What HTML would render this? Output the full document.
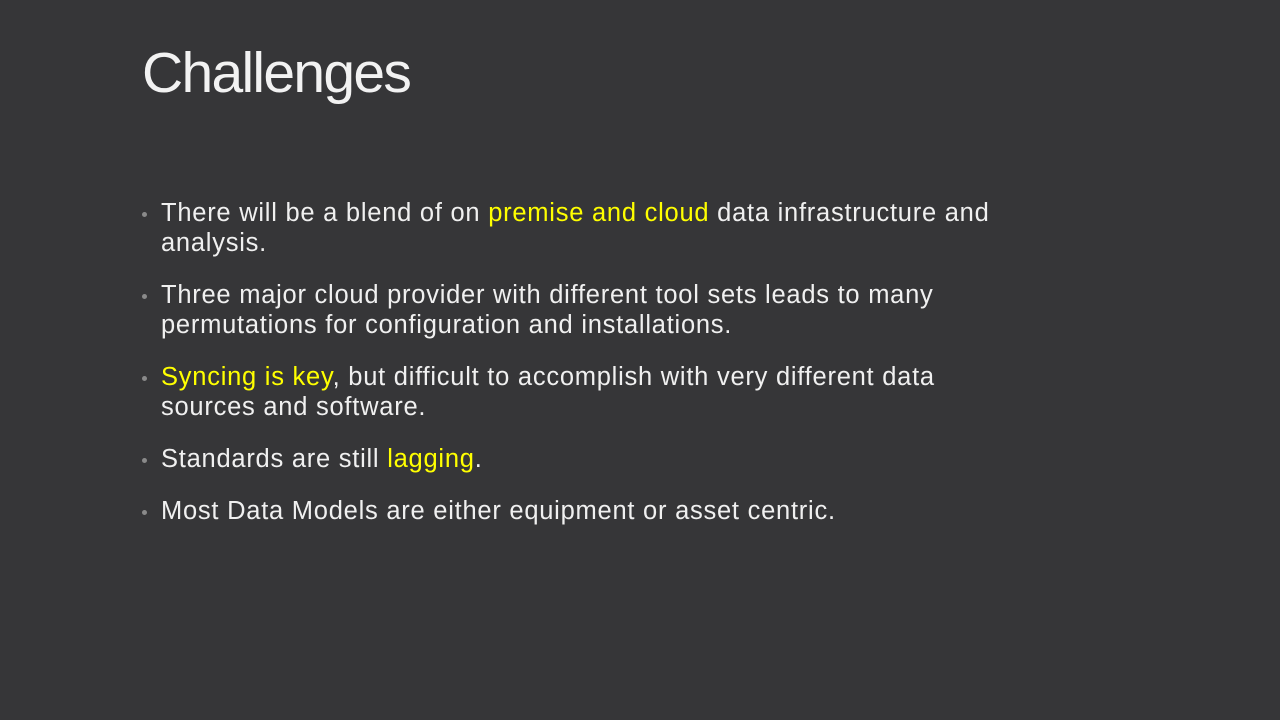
<!DOCTYPE html>
<html><head><meta charset="utf-8"><style>
body{margin:0;width:1280px;height:720px;background:#363638;overflow:hidden;font-family:"Liberation Sans","DejaVu Sans",sans-serif;color:#f0f0f0;position:relative}
h1{position:absolute;left:142px;top:40px;margin:0;font-weight:normal;font-size:57px;letter-spacing:-1.7px;color:#f2f2f2}
.l{position:absolute;left:161px;font-size:25.5px;white-space:nowrap;letter-spacing:0.75px;line-height:30px}
.b{position:absolute;left:142px;width:5px;height:5px;border-radius:50%;background:#8a8a8a}
.y{color:#ffff00}
</style></head><body>
<h1>Challenges</h1>
<div class="b" style="top:212px"></div>
<div class="l" style="top:198px">There will be a blend of on <span class="y">premise and cloud</span> data infrastructure and</div>
<div class="l" style="top:228px">analysis.</div>
<div class="b" style="top:294px"></div>
<div class="l" style="top:280px">Three major cloud provider with different tool sets leads to many</div>
<div class="l" style="top:310px">permutations for configuration and installations.</div>
<div class="b" style="top:376px"></div>
<div class="l" style="top:362px"><span class="y">Syncing is key</span>, but difficult to accomplish with very different data</div>
<div class="l" style="top:392px">sources and software.</div>
<div class="b" style="top:458px"></div>
<div class="l" style="top:444px">Standards are still <span class="y">lagging</span>.</div>
<div class="b" style="top:510px"></div>
<div class="l" style="top:496px">Most Data Models are either equipment or asset centric.</div>
</body></html>
